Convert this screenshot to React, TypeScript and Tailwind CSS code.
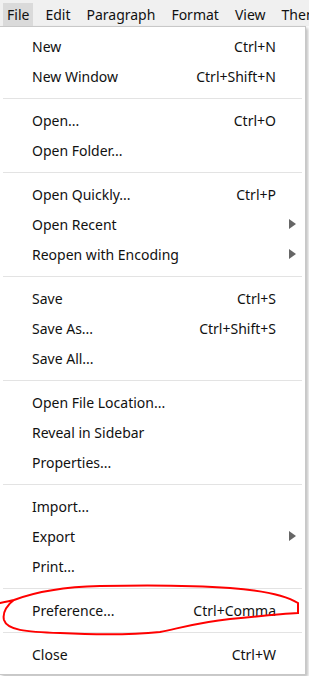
import React from "react";

type Item =
  | {type: "item"; label: string; shortcut?: string; sub?: boolean}
  | {type: "sep"};

const menuBar = ["File", "Edit", "Paragraph", "Format", "View", "Themes"];

const fileMenu: Item[] = [
  {type: "item", label: "New", shortcut: "Ctrl+N"},
  {type: "item", label: "New Window", shortcut: "Ctrl+Shift+N"},
  {type: "sep"},
  {type: "item", label: "Open...", shortcut: "Ctrl+O"},
  {type: "item", label: "Open Folder..."},
  {type: "sep"},
  {type: "item", label: "Open Quickly...", shortcut: "Ctrl+P"},
  {type: "item", label: "Open Recent", sub: true},
  {type: "item", label: "Reopen with Encoding", sub: true},
  {type: "sep"},
  {type: "item", label: "Save", shortcut: "Ctrl+S"},
  {type: "item", label: "Save As...", shortcut: "Ctrl+Shift+S"},
  {type: "item", label: "Save All..."},
  {type: "sep"},
  {type: "item", label: "Open File Location..."},
  {type: "item", label: "Reveal in Sidebar"},
  {type: "item", label: "Properties..."},
  {type: "sep"},
  {type: "item", label: "Import..."},
  {type: "item", label: "Export", sub: true},
  {type: "item", label: "Print..."},
  {type: "sep"},
  {type: "item", label: "Preference...", shortcut: "Ctrl+Comma"},
  {type: "sep"},
  {type: "item", label: "Close", shortcut: "Ctrl+W"},
];

const App = () => {
  return (
    <div
      className="relative w-[309px] h-[676px] overflow-hidden bg-white text-[14px] text-[#111]"
      style={{fontFamily: '"Noto Sans", "Open Sans", sans-serif'}}
    >
      {/* top menu bar */}
      <div className="flex items-center h-[26px] bg-[#f0f0f0] pl-[3px] gap-[8px] whitespace-nowrap">
        {menuBar.map((name, i) => (
          <div
            key={name}
            className={
              i === 0
                ? "h-[23px] mt-[3px] flex items-center px-[4px] bg-[#dadada]"
                : "h-[23px] mt-[3px] flex items-center px-[4px]"
            }
          >
            {name}
          </div>
        ))}
      </div>

      {/* file dropdown */}
      <div className="w-[306px] bg-white border-t border-r border-b border-[#c8c8c8] shadow-[2px_2px_3px_rgba(0,0,0,0.25)] pt-[4px] pb-[5px]">
        {fileMenu.map((item, index) =>
          item.type === "sep" ? (
            <div key={index} className="h-[14px] flex items-center px-[3px]">
              <div className="h-px w-full bg-[#e3e3e3]" />
            </div>
          ) : (
            <div
              key={index}
              className="h-[30px] flex items-center justify-between pl-[32px] pr-[29px]"
            >
              <span>{item.label}</span>
              {item.shortcut && <span>{item.shortcut}</span>}
              {item.sub && (
                <svg width="7" height="10" viewBox="0 0 7 10" className="-mr-[20px]">
                  <path d="M0 0 L7 5 L0 10 Z" fill="#666" />
                </svg>
              )}
            </div>
          )
        )}
      </div>

      {/* red marker circle */}
      <svg
        className="absolute left-0 top-0 pointer-events-none"
        width="309"
        height="676"
        viewBox="0 0 309 676"
      >
        <path
          d="M0 603 C5 602 10 601 14 600 M14 600 C8 604 2 612 4 620 C7 630 25 632 60 633 C100 635 140 634 160 632 C180 628 200 622 230 619 C260 616 280 614 298 613 L298 603 C290 598 270 591 230 588 C190 585 150 585 100 586 C60 587 35 592 14 600"
          fill="none"
          stroke="#f00"
          strokeWidth="2"
          strokeLinecap="round"
        />
      </svg>
    </div>
  );
};

export default App;
